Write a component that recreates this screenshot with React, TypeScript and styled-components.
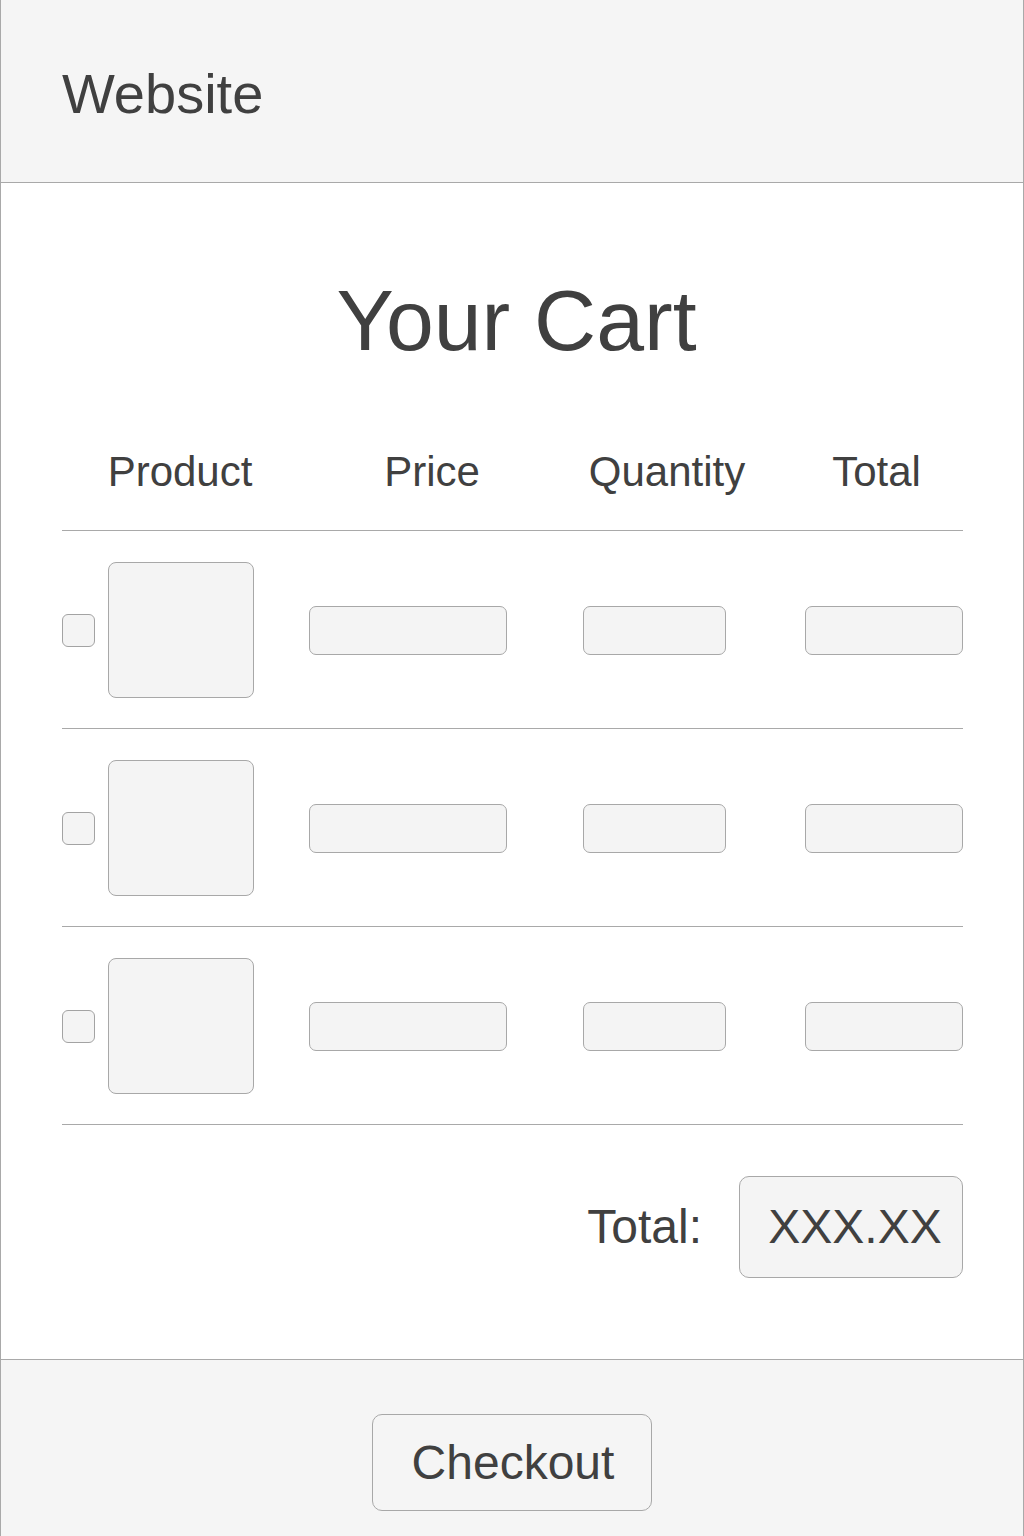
import styled, { createGlobalStyle } from 'styled-components'

const GlobalStyle = createGlobalStyle`
  html, body {
    margin: 0;
    padding: 0;
    background: #ffffff;
  }

  * {
    box-sizing: border-box;
  }
`

const Page = styled.div`
  width: 1024px;
  min-height: 1536px;
  display: flex;
  flex-direction: column;
  border-left: 1px solid #a9a9a9;
  border-right: 1px solid #a9a9a9;
  font-family: 'Liberation Sans', Arial, sans-serif;
  color: #404040;
`

const TopBar = styled.header`
  height: 183px;
  display: flex;
  align-items: center;
  padding: 5px 0 0 61px;
  background: #f5f5f5;
  border-bottom: 1px solid #a9a9a9;
`

const Brand = styled.div`
  font-size: 56px;
  line-height: 1;
`

const Main = styled.main`
  flex: 1;
  display: flex;
  flex-direction: column;
  padding: 0 60px 0 61px;
`

const Title = styled.h1`
  margin: 94px 0 0;
  padding-left: 8px;
  font-size: 86px;
  font-weight: 400;
  line-height: 1;
  text-align: center;
`

const HeadRow = styled.div`
  margin-top: 88px;
  display: grid;
  grid-template-columns: 236px 268px 202px 1fr;
  padding-bottom: 37px;
  border-bottom: 1px solid #a9a9a9;
`

const HeadCell = styled.div<{ $shift?: number }>`
  font-size: 42px;
  line-height: 1;
  text-align: center;
  padding-left: ${({ $shift }) => $shift ?? 0}px;
`

const Row = styled.div`
  display: flex;
  align-items: center;
  padding: 31px 0 30px;
  border-bottom: 1px solid #a9a9a9;
`

const Check = styled.div`
  flex: none;
  width: 33px;
  height: 33px;
  border: 1.5px solid #a3a3a3;
  border-radius: 6px;
  background: #f4f4f4;
`

const Thumb = styled.div`
  flex: none;
  width: 146px;
  height: 136px;
  margin-left: 13px;
  border: 1.5px solid #a8a8a8;
  border-radius: 8px;
  background: #f4f4f4;
`

const Field = styled.div<{ $gap: number; $width: number }>`
  flex: none;
  width: ${({ $width }) => $width}px;
  height: 49px;
  margin-left: ${({ $gap }) => $gap}px;
  border: 1.5px solid #a8a8a8;
  border-radius: 7px;
  background: #f4f4f4;
`

const Summary = styled.div`
  margin-top: 51px;
  display: flex;
  justify-content: flex-end;
  align-items: center;
  gap: 37px;
`

const SummaryLabel = styled.span`
  font-size: 48px;
  line-height: 1;
`

const SummaryValue = styled.div`
  width: 224px;
  height: 102px;
  display: flex;
  align-items: center;
  justify-content: center;
  padding-left: 8px;
  font-size: 48px;
  line-height: 1;
  border: 1.5px solid #a8a8a8;
  border-radius: 10px;
  background: #f4f4f4;
`

const Footer = styled.footer`
  height: 177px;
  display: flex;
  justify-content: center;
  align-items: flex-start;
  padding-top: 54px;
  background: #f5f5f5;
  border-top: 1px solid #a9a9a9;
`

const CheckoutButton = styled.button`
  width: 280px;
  height: 97px;
  padding: 0 0 0 2px;
  font-family: 'Liberation Sans', Arial, sans-serif;
  font-size: 48px;
  color: #404040;
  background: #f5f5f5;
  border: 1.5px solid #a8a8a8;
  border-radius: 10px;
  cursor: pointer;
`

const items = [1, 2, 3]

export default function App() {
  return (
    <>
      <GlobalStyle />
      <Page>
        <TopBar>
          <Brand>Website</Brand>
        </TopBar>
        <Main>
          <Title>Your Cart</Title>
          <HeadRow>
            <HeadCell>Product</HeadCell>
            <HeadCell>Price</HeadCell>
            <HeadCell>Quantity</HeadCell>
            <HeadCell $shift={22}>Total</HeadCell>
          </HeadRow>
          {items.map((id) => (
            <Row key={id}>
              <Check />
              <Thumb />
              <Field $gap={55} $width={198} />
              <Field $gap={76} $width={143} />
              <Field $gap={79} $width={158} />
            </Row>
          ))}
          <Summary>
            <SummaryLabel>Total:</SummaryLabel>
            <SummaryValue>XXX.XX</SummaryValue>
          </Summary>
        </Main>
        <Footer>
          <CheckoutButton>Checkout</CheckoutButton>
        </Footer>
      </Page>
    </>
  )
}
